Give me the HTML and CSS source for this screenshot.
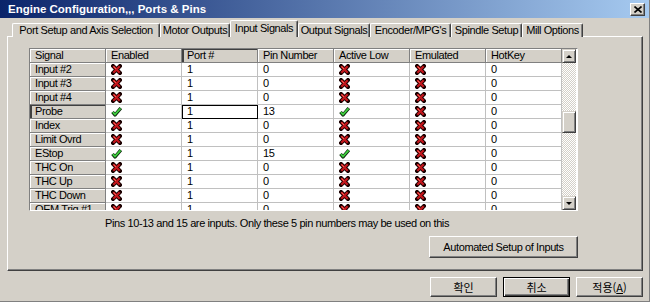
FILE: index.html
```html
<!DOCTYPE html>
<html lang="ko">
<head>
    <meta charset="UTF-8">
    <title>Engine Configuration... Ports &amp; Pins</title>
    <link rel="stylesheet" href="styles.css">
</head>
<body>
    <svg class="defs" width="0" height="0">
        <symbol id="no" viewBox="0 0 11 11">
            <path d="M2 2L9 9M9 2L2 9" stroke="#1a0000" stroke-width="4" stroke-linecap="square" fill="none"/>
            <path d="M2.3 2.3L8.7 8.7M8.7 2.3L2.3 8.7" stroke="#c4161c" stroke-width="2.2" fill="none"/>
            <path d="M2.5 2.5L5 5" stroke="#ff6a5a" stroke-width="0.9" fill="none"/>
        </symbol>
        <symbol id="yes" viewBox="0 0 11 10">
            <path d="M1.5 5.5L4 8.5L9.8 1.5" stroke="#0d2a0d" stroke-width="3.4" fill="none" stroke-linejoin="round"/>
            <path d="M1.8 5.6L4 8L9.5 1.8" stroke="#3fd03f" stroke-width="1.8" fill="none"/>
        </symbol>
    </svg>

    <div class="window">
        <div class="titlebar">
            <span class="title">Engine Configuration,,, Ports &amp; Pins</span>
            <span class="close"><svg width="8" height="7" viewBox="0 0 8 7"><path d="M0.5 0.5L7.5 6.5M7.5 0.5L0.5 6.5" stroke="#000" stroke-width="1.6"/></svg></span>
        </div>

        <div class="body">
            <div class="tabs">
                <div class="tab t1">Port Setup and Axis Selection</div>
                <div class="tab t2">Motor Outputs</div>
                <div class="tab t3 active">Input Signals</div>
                <div class="tab t4">Output Signals</div>
                <div class="tab t5">Encoder/MPG's</div>
                <div class="tab t6">Spindle Setup</div>
                <div class="tab t7">Mill Options</div>
            </div>

            <div class="panel">
                <div class="grid-box">
                    <div class="grid">
                        <div class="row head">
                            <div class="c rh">Signal</div>
                            <div class="c hd">Enabled</div>
                            <div class="c hd cur-col">Port #</div>
                            <div class="c hd">Pin Number</div>
                            <div class="c hd">Active Low</div>
                            <div class="c hd">Emulated</div>
                            <div class="c hd">HotKey</div>
                        </div>
                        <div class="row">
                            <div class="c rh">Input #2</div>
                            <div class="c"><svg class="ic"><use href="#no"/></svg></div>
                            <div class="c">1</div><div class="c">0</div>
                            <div class="c"><svg class="ic"><use href="#no"/></svg></div>
                            <div class="c"><svg class="ic"><use href="#no"/></svg></div>
                            <div class="c">0</div>
                        </div>
                        <div class="row">
                            <div class="c rh">Input #3</div>
                            <div class="c"><svg class="ic"><use href="#no"/></svg></div>
                            <div class="c">1</div><div class="c">0</div>
                            <div class="c"><svg class="ic"><use href="#no"/></svg></div>
                            <div class="c"><svg class="ic"><use href="#no"/></svg></div>
                            <div class="c">0</div>
                        </div>
                        <div class="row">
                            <div class="c rh">Input #4</div>
                            <div class="c"><svg class="ic"><use href="#no"/></svg></div>
                            <div class="c">1</div><div class="c">0</div>
                            <div class="c"><svg class="ic"><use href="#no"/></svg></div>
                            <div class="c"><svg class="ic"><use href="#no"/></svg></div>
                            <div class="c">0</div>
                        </div>
                        <div class="row">
                            <div class="c rh cur-row">Probe</div>
                            <div class="c"><svg class="ic"><use href="#yes"/></svg></div>
                            <div class="c focus">1</div><div class="c">13</div>
                            <div class="c"><svg class="ic"><use href="#yes"/></svg></div>
                            <div class="c"><svg class="ic"><use href="#no"/></svg></div>
                            <div class="c">0</div>
                        </div>
                        <div class="row">
                            <div class="c rh">Index</div>
                            <div class="c"><svg class="ic"><use href="#no"/></svg></div>
                            <div class="c">1</div><div class="c">0</div>
                            <div class="c"><svg class="ic"><use href="#no"/></svg></div>
                            <div class="c"><svg class="ic"><use href="#no"/></svg></div>
                            <div class="c">0</div>
                        </div>
                        <div class="row">
                            <div class="c rh">Limit Ovrd</div>
                            <div class="c"><svg class="ic"><use href="#no"/></svg></div>
                            <div class="c">1</div><div class="c">0</div>
                            <div class="c"><svg class="ic"><use href="#no"/></svg></div>
                            <div class="c"><svg class="ic"><use href="#no"/></svg></div>
                            <div class="c">0</div>
                        </div>
                        <div class="row">
                            <div class="c rh">EStop</div>
                            <div class="c"><svg class="ic"><use href="#yes"/></svg></div>
                            <div class="c">1</div><div class="c">15</div>
                            <div class="c"><svg class="ic"><use href="#yes"/></svg></div>
                            <div class="c"><svg class="ic"><use href="#no"/></svg></div>
                            <div class="c">0</div>
                        </div>
                        <div class="row">
                            <div class="c rh">THC On</div>
                            <div class="c"><svg class="ic"><use href="#no"/></svg></div>
                            <div class="c">1</div><div class="c">0</div>
                            <div class="c"><svg class="ic"><use href="#no"/></svg></div>
                            <div class="c"><svg class="ic"><use href="#no"/></svg></div>
                            <div class="c">0</div>
                        </div>
                        <div class="row">
                            <div class="c rh">THC Up</div>
                            <div class="c"><svg class="ic"><use href="#no"/></svg></div>
                            <div class="c">1</div><div class="c">0</div>
                            <div class="c"><svg class="ic"><use href="#no"/></svg></div>
                            <div class="c"><svg class="ic"><use href="#no"/></svg></div>
                            <div class="c">0</div>
                        </div>
                        <div class="row">
                            <div class="c rh">THC Down</div>
                            <div class="c"><svg class="ic"><use href="#no"/></svg></div>
                            <div class="c">1</div><div class="c">0</div>
                            <div class="c"><svg class="ic"><use href="#no"/></svg></div>
                            <div class="c"><svg class="ic"><use href="#no"/></svg></div>
                            <div class="c">0</div>
                        </div>
                        <div class="row">
                            <div class="c rh">OEM Trig #1</div>
                            <div class="c"><svg class="ic"><use href="#no"/></svg></div>
                            <div class="c">1</div><div class="c">0</div>
                            <div class="c"><svg class="ic"><use href="#no"/></svg></div>
                            <div class="c"><svg class="ic"><use href="#no"/></svg></div>
                            <div class="c">0</div>
                        </div>
                    </div>
                    <div class="vscroll">
                        <div class="sbtn"><span class="arrow up"></span></div>
                        <div class="track">
                            <div class="thumb"></div>
                        </div>
                        <div class="sbtn"><span class="arrow down"></span></div>
                    </div>
                </div>

                <p class="note">Pins 10-13 and 15 are inputs. Only these 5 pin numbers may be used on this</p>

                <div class="auto-row">
                    <button class="btn auto">Automated Setup of Inputs</button>
                </div>
            </div>

            <div class="dlg-buttons">
                <button class="btn dlg">확인</button>
                <button class="btn dlg default">취소</button>
                <button class="btn dlg">적용(<u>A</u>)</button>
            </div>
        </div>
    </div>
</body>
</html>
```

FILE: styles.css
```css
body {
    margin: 0;
    padding: 0;
    background-color: #d4d0c8;
    font-family: "Liberation Sans", Arial, "Noto Sans CJK KR", sans-serif;
    font-size: 11px;
    letter-spacing: -0.4px;
    color: #000;
}
.defs {
    position: absolute;
    width: 0;
    height: 0;
}
.window {
    width: 650px;
    height: 302px;
    box-sizing: border-box;
    border-right: 1px solid #808080;
    border-bottom: 1px solid #808080;
    overflow: hidden;
}
.titlebar {
    height: 18px;
    display: flex;
    align-items: center;
    justify-content: space-between;
    padding: 0 4px 0 8px;
    background: linear-gradient(to right, #0a246a, #a6caf0);
}
.title {
    color: #fff;
    font-weight: bold;
    font-size: 11.5px;
    letter-spacing: 0;
}
.close {
    width: 13px;
    height: 11px;
    display: flex;
    align-items: center;
    justify-content: center;
    background: #d4d0c8;
    border: 1px solid;
    border-color: #fff #404040 #404040 #fff;
    box-shadow: inset -1px -1px #808080;
}
.body {
    padding: 3px 6px 0 7px;
}
.tabs {
    display: flex;
    align-items: flex-end;
    height: 16px;
    padding-left: 5px;
    margin-bottom: -1px;
    position: relative;
    z-index: 1;
}
.tab {
    height: 14px;
    line-height: 13px;
    box-sizing: border-box;
    text-align: center;
    border-top: 1px solid #fff;
    border-left: 1px solid #fff;
    border-right: 1px solid #404040;
    border-radius: 2px 2px 0 0;
    box-shadow: inset -1px 0 #808080;
    white-space: nowrap;
    background: #d4d0c8;
}
.t1 { width: 148px; }
.t2 { width: 70px; }
.t3 { width: 68px; }
.t4 { width: 72px; }
.t5 { width: 81px; }
.t6 { width: 71px; }
.t7 { width: 61px; }
.tab.active {
    height: 17px;
    line-height: 14px;
    position: relative;
}
.panel {
    width: 636px;
    box-sizing: border-box;
    border: 1px solid;
    border-color: #fff #404040 #404040 #fff;
    box-shadow: inset -1px -1px #808080;
    padding: 11px 0 12px 21px;
}
.grid-box {
    display: flex;
    width: 547px;
    height: 161px;
    border: 1px solid;
    border-color: #808080 #fff #fff #808080;
    overflow: hidden;
    background: #fff;
}
.grid {
    width: 532px;
}
.row {
    display: grid;
    grid-template-columns: repeat(7, 76px);
}
.c {
    height: 14px;
    box-sizing: border-box;
    border-right: 1px solid #c0c0c0;
    border-bottom: 1px solid #c0c0c0;
    padding-left: 5px;
    line-height: 13px;
    white-space: nowrap;
    overflow: hidden;
    background: #fff;
}
.c .ic {
    width: 11px;
    height: 11px;
    margin-top: 1px;
    display: block;
}
.rh, .hd {
    background: #d4d0c8;
    border-right-color: #808080;
    border-bottom-color: #808080;
    box-shadow: inset 1px 1px #fff;
}
.cur-row {
    box-shadow: inset 2px 1px #404040;
}
.cur-col {
    box-shadow: inset 2px 1px #404040;
}
.focus {
    outline: 1px solid #000;
    outline-offset: -1px;
}
.vscroll {
    width: 14px;
    display: flex;
    flex-direction: column;
}
.sbtn {
    height: 14px;
    box-sizing: border-box;
    background: #d4d0c8;
    border: 1px solid;
    border-color: #d4d0c8 #404040 #404040 #d4d0c8;
    box-shadow: inset 1px 1px #fff, inset -1px -1px #808080;
    display: flex;
    align-items: center;
    justify-content: center;
}
.arrow {
    width: 0;
    height: 0;
    border-left: 3px solid transparent;
    border-right: 3px solid transparent;
}
.arrow.up {
    border-bottom: 3px solid #000;
}
.arrow.down {
    border-top: 3px solid #000;
}
.track {
    flex: 1;
    background: repeating-conic-gradient(#fff 0 25%, #d4d0c8 0 50%) 0 0 / 2px 2px;
    padding-top: 48px;
}
.thumb {
    height: 22px;
    box-sizing: border-box;
    background: #d4d0c8;
    border: 1px solid;
    border-color: #d4d0c8 #404040 #404040 #d4d0c8;
    box-shadow: inset 1px 1px #fff, inset -1px -1px #808080;
}
.note {
    margin: 5px 0 0 76px;
    height: 14px;
    line-height: 14px;
}
.auto-row {
    display: flex;
    justify-content: flex-end;
    width: 549px;
    margin-top: 6px;
}
.btn {
    font-family: inherit;
    font-size: 11px;
    letter-spacing: -0.4px;
    color: #000;
    background: #d4d0c8;
    border: 1px solid;
    border-color: #fff #404040 #404040 #fff;
    box-shadow: inset -1px -1px #808080;
    padding: 0;
}
.auto {
    width: 149px;
    height: 22px;
}
.dlg-buttons {
    display: flex;
    justify-content: flex-end;
    gap: 6px;
    margin-top: 6px;
}
.dlg {
    width: 67px;
    height: 20px;
    font-family: "Noto Sans CJK KR", sans-serif;
    letter-spacing: 0;
}
.default {
    border: 1px solid #000;
    box-shadow: inset 1px 1px #fff, inset -1px -1px #404040, inset -2px -2px #808080;
}
```
